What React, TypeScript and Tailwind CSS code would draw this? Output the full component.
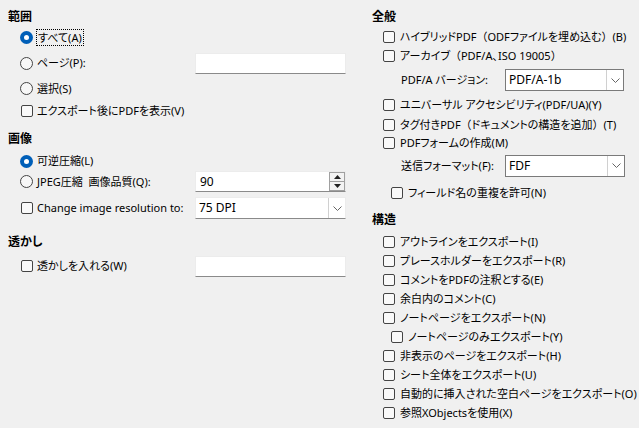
import React from 'react'

const font = "font-['Noto_Sans','Noto_Sans_CJK_JP',sans-serif] [font-feature-settings:'palt']"

// full-width punctuation keeps its full width, as in the reference
function Label({ text }: { text: string }) {
  const parts = text.split(/([（）])/)
  return (
    <span className="whitespace-nowrap">
      {parts.map((p, i) =>
        p === '（' || p === '）' ? (
          <span key={i} className="[font-feature-settings:normal]">
            {p}
          </span>
        ) : (
          <React.Fragment key={i}>{p}</React.Fragment>
        )
      )}
    </span>
  )
}

function Radio({ checked }: { checked?: boolean }) {
  if (checked) {
    return (
      <span className="w-[13px] h-[13px] rounded-full bg-[#005fb8] flex items-center justify-center shrink-0">
        <span className="w-[5px] h-[5px] rounded-full bg-white" />
      </span>
    )
  }
  return <span className="w-[13px] h-[13px] rounded-full border border-[#444] bg-[#f7f7f7] shrink-0" />
}

function Check() {
  return <span className="w-[12px] h-[12px] rounded-[2px] border border-[#444] bg-[#f9f9f9] shrink-0" />
}

function TextBox({ value }: { value?: string }) {
  return (
    <div className="w-[151px] h-[21px] bg-white border border-[#ececec] border-b-[#8a8a8a] flex items-center px-[4px]">
      {value}
    </div>
  )
}

function Spin({ value }: { value: string }) {
  return (
    <div className="w-[151px] h-[21px] bg-white border border-[#ececec] border-b-[#8a8a8a] flex items-center">
      <span className="flex-1 pl-[4px] text-[12px]">{value}</span>
      <div className="w-[16px] h-full flex flex-col">
        <div className="flex-1 border border-[#a0a0a0] bg-[#f3f3f3] flex items-center justify-center">
          <svg width="7" height="4" viewBox="0 0 7 4"><path d="M0 4 L3.5 0 L7 4 Z" fill="#222" /></svg>
        </div>
        <div className="flex-1 border border-t-0 border-[#a0a0a0] bg-[#f3f3f3] flex items-center justify-center">
          <svg width="7" height="4" viewBox="0 0 7 4"><path d="M0 0 L3.5 4 L7 0 Z" fill="#222" /></svg>
        </div>
      </div>
    </div>
  )
}

function Chevron() {
  return (
    <svg width="9" height="5" viewBox="0 0 9 5">
      <path d="M0.5 0.5 L4.5 4.5 L8.5 0.5" fill="none" stroke="#666" strokeWidth="1" />
    </svg>
  )
}

function Combo({ value, width, framed }: { value: string; width: string; framed?: boolean }) {
  return (
    <div
      className={`${width} h-[22px] bg-white flex items-center shrink-0 ${
        framed ? 'border border-[#7a7a7a]' : 'border border-[#ececec] border-b-[#8a8a8a]'
      }`}
    >
      <span className="flex-1 pl-[3px] text-[12px]">{value}</span>
      <div className="w-[17px] h-full border-l border-[#d0d0d0] flex items-center justify-center">
        <Chevron />
      </div>
    </div>
  )
}

function Heading({ children, className = '' }: { children: React.ReactNode; className?: string }) {
  return <div className={`h-[18px] flex items-center font-bold text-[12px] ${className}`}>{children}</div>
}

function CheckRow({ label, className = '', indent }: { label: string; className?: string; indent?: boolean }) {
  return (
    <div className={`flex items-center gap-[5px] ${indent ? 'pl-[19px]' : 'pl-[11px]'} ${className}`}>
      <Check />
      <Label text={label} />
    </div>
  )
}

export default function App() {
  return (
    <div className={`w-[639px] h-[428px] overflow-hidden bg-[#f0f0f0] text-black text-[11px] leading-[16px] flex ${font}`}>
      {/* left column */}
      <div className="w-[364px] shrink-0 pl-[8px] pt-[8px] flex flex-col">
        <Heading>範囲</Heading>
        <div className="h-[19px] mt-[2px] pl-[12px] flex items-center gap-[4px]">
          <Radio checked />
          <span className="outline outline-1 outline-dotted outline-black px-[1px] leading-[15px]">すべて(A)</span>
        </div>
        <div className="h-[22px] mt-[5px] pl-[12px] flex items-center">
          <div className="w-[175px] flex items-center gap-[4px]">
            <Radio />
            <span>ページ(P):</span>
          </div>
          <TextBox />
        </div>
        <div className="h-[19px] mt-[5px] pl-[12px] flex items-center gap-[4px]">
          <Radio />
          <span>選択(S)</span>
        </div>
        <div className="h-[19px] mt-[3px] pl-[13px] flex items-center gap-[4px]">
          <Check />
          <span>エクスポート後にPDFを表示(V)</span>
        </div>

        <Heading className="mt-[10px]">画像</Heading>
        <div className="h-[20px] mt-[3px] pl-[12px] flex items-center gap-[4px]">
          <Radio checked />
          <span>可逆圧縮(L)</span>
        </div>
        <div className="h-[21px] pl-[12px] flex items-center">
          <div className="w-[175px] flex items-center gap-[4px]">
            <Radio />
            <span>JPEG圧縮&nbsp;&nbsp;画像品質(Q):</span>
          </div>
          <Spin value="90" />
        </div>
        <div className="h-[22px] mt-[5px] pl-[12px] flex items-center">
          <div className="w-[175px] flex items-center gap-[4px] pl-[1px]">
            <Check />
            <span>Change image resolution to:</span>
          </div>
          <Combo value="75 DPI" width="w-[151px]" />
        </div>

        <Heading className="mt-[14px]">透かし</Heading>
        <div className="h-[22px] mt-[4px] pl-[12px] flex items-center">
          <div className="w-[175px] flex items-center gap-[4px] pl-[1px]">
            <Check />
            <span>透かしを入れる(W)</span>
          </div>
          <TextBox />
        </div>
      </div>

      {/* right column */}
      <div className="flex-1 pl-[8px] pt-[8px] flex flex-col">
        <Heading>全般</Heading>
        <CheckRow className="h-[18px] mt-[2px]" label="ハイブリッドPDF（ODFファイルを埋め込む）(B)" />
        <CheckRow className="h-[19px]" label="アーカイブ（PDF/A、ISO 19005）" />
        <div className="h-[22px] mt-[4px] pl-[29px] flex items-center">
          <span className="w-[104px] shrink-0">PDF/A バージョン:</span>
          <Combo value="PDF/A-1b" width="w-[119px]" framed />
        </div>
        <CheckRow className="h-[20px] mt-[4px]" label="ユニバーサル アクセシビリティ(PDF/UA)(Y)" />
        <CheckRow className="h-[19px]" label="タグ付きPDF（ドキュメントの構造を追加）(T)" />
        <CheckRow className="h-[18px]" label="PDFフォームの作成(M)" />
        <div className="h-[23px] mt-[2px] pl-[29px] flex items-center">
          <span className="w-[104px] shrink-0">送信フォーマット(F):</span>
          <Combo value="FDF" width="w-[120px]" framed />
        </div>
        <CheckRow className="h-[20px] mt-[6px]" indent label="フィールド名の重複を許可(N)" />

        <Heading className="mt-[8px]">構造</Heading>
        <CheckRow className="h-[19px] mt-[3px]" label="アウトラインをエクスポート(I)" />
        <CheckRow className="h-[19px]" label="プレースホルダーをエクスポート(R)" />
        <CheckRow className="h-[19px]" label="コメントをPDFの注釈とする(E)" />
        <CheckRow className="h-[19px]" label="余白内のコメント(C)" />
        <CheckRow className="h-[19px]" label="ノートページをエクスポート(N)" />
        <CheckRow className="h-[19px]" indent label="ノートページのみエクスポート(Y)" />
        <CheckRow className="h-[19px]" label="非表示のページをエクスポート(H)" />
        <CheckRow className="h-[19px]" label="シート全体をエクスポート(U)" />
        <CheckRow className="h-[19px]" label="自動的に挿入された空白ページをエクスポート(O)" />
        <CheckRow className="h-[19px]" label="参照XObjectsを使用(X)" />
      </div>
    </div>
  )
}
